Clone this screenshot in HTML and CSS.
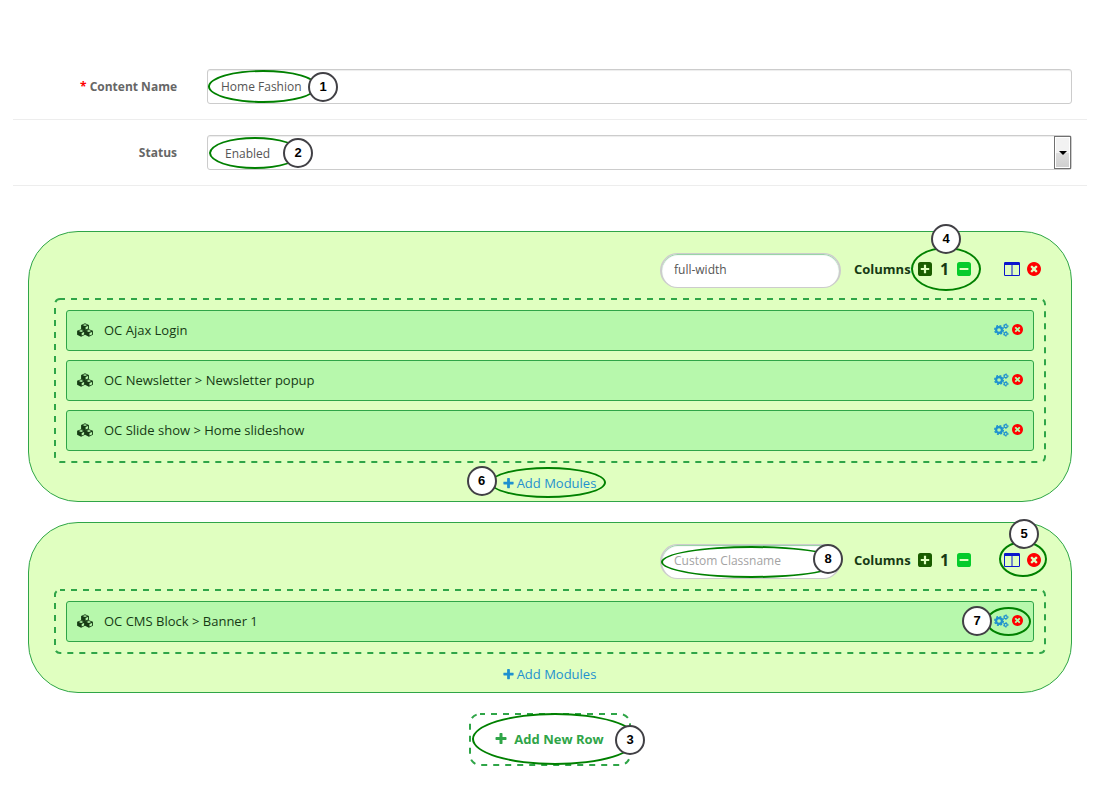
FILE: index.html
```html
<!DOCTYPE html>
<html lang="en">
<head>
<meta charset="utf-8">
<title>Content layout</title>
<link rel="stylesheet" href="styles.css">
</head>
<body>
<svg class="sprite" aria-hidden="true">
  <symbol id="plus" viewBox="0 0 1792 1792"><path d="M1600 736v192q0 40-28 68t-68 28h-416v416q0 40-28 68t-68 28h-192q-40 0-68-28t-28-68v-416h-416q-40 0-68-28t-28-68v-192q0-40 28-68t68-28h416v-416q0-40 28-68t68-28h192q40 0 68 28t28 68v416h416q40 0 68 28t28 68z"/></symbol>
  <symbol id="plus-square" viewBox="0 0 14 14"><rect width="14" height="14" rx="2.6"/><path d="M5.9 2.8h2.2v3.1h3.1v2.2H8.1v3.1H5.9V8.1H2.8V5.9h3.1z" fill="#e0ffc0"/></symbol>
  <symbol id="minus-square" viewBox="0 0 14 14"><rect width="14" height="14" rx="2.6"/><path d="M2.6 6h8.8v2H2.6z" fill="#e0ffc0"/></symbol>
  <symbol id="columns" viewBox="0 0 16 14"><path fill-rule="evenodd" d="M1.3 0h13.4Q16 0 16 1.3v11.4q0 1.3-1.3 1.3H1.3Q0 14 0 12.700V1.300Q0 0 1.300 0zM1 3v10h6.500V3zM8.500 3v10H15V3z"/></symbol>
  <symbol id="times-circle" viewBox="128 128 1536 1536"><path d="M1277 1122q0-26-19-45l-181-181 181-181q19-19 19-45 0-27-19-46l-90-90q-19-19-46-19-26 0-45 19l-181 181-181-181q-19-19-45-19-27 0-46 19l-90 90q-19 19-19 46 0 26 19 45l181 181-181 181q-19 19-19 45 0 27 19 46l90 90q19 19 46 19 26 0 45-19l181-181 181 181q19 19 45 19 27 0 46-19l90-90q19-19 19-46zm387-226q0 209-103 385.500t-279.500 279.500-385.500 103-385.500-103-279.500-279.500-103-385.500 103-385.500 279.500-279.500 385.500-103 385.500 103 279.500 279.500 103 385.500z"/></symbol>
  <symbol id="cubes" viewBox="0 0 16 14">
    <path d="M8 .3l3.900 1.600v4L8 7.700 4.100 6V2zM4.100 6.200l3.900 1.600v4l-3.900 1.900L.100 11.800v-4zM11.900 6.200l4 1.600v4l-4 1.900L8 11.800v-4z"/>
    <path fill="#b7f8ac" d="M8 1.200l2.300.9-2.300.9-2.300-.9zM8.600 4l2.400-1v2.500l-2.400 1.100zM4.100 7.100l2.300.9-2.300.9L1.800 8zM4.700 9.900l2.400-1v2.500l-2.400 1.100zM11.900 7.100l2.300.9-2.300.9L9.600 8zM12.500 9.900l2.500-1v2.500l-2.500 1.100z"/>
  </symbol>
  <symbol id="cogs" viewBox="0 0 15 14">
    <g fill="none" stroke="currentColor">
      <circle cx="5" cy="7" r="2.900" stroke-width="2.200"/>
      <circle cx="5" cy="7" r="4.300" stroke-width="1.400" stroke-dasharray="1.900 1.477"/>
      <circle cx="11.700" cy="3.200" r="1.500" stroke-width="1.200"/>
      <circle cx="11.700" cy="3.200" r="2.300" stroke-width="1" stroke-dasharray="1.200 1.209"/>
      <circle cx="11.700" cy="10.800" r="1.500" stroke-width="1.200"/>
      <circle cx="11.700" cy="10.800" r="2.300" stroke-width="1" stroke-dasharray="1.200 1.209"/>
    </g>
  </symbol>
</svg>

<form class="page">
  <div class="form-group">
    <label class="form-label" for="content-name"><span class="required">*</span> Content Name</label>
    <div class="field">
      <input class="control" id="content-name" type="text" value="Home Fashion">
      <span class="ring ring-name"></span><span class="badge badge-name">1</span>
    </div>
  </div>
  <div class="form-group">
    <label class="form-label" for="status">Status</label>
    <div class="field">
      <select class="control select" id="status"><option>Enabled</option><option>Disabled</option></select>
      <span class="select-arrow"></span>
      <span class="ring ring-status"></span><span class="badge badge-status">2</span>
    </div>
  </div>

  <div class="rows">
    <section class="row">
      <div class="row-header">
        <div class="class-field">
          <input class="control pill" type="text" aria-label="Class name" placeholder="Custom Classname" value="full-width">
        </div>
        <div class="row-tools">
          <strong class="columns-label">Columns</strong>
          <div class="counter">
            <button class="icon-btn add" type="button" aria-label="Add column"><svg class="icon-square"><use href="#plus-square"/></svg></button>
            <span class="count">1</span>
            <button class="icon-btn subtract" type="button" aria-label="Remove column"><svg class="icon-square"><use href="#minus-square"/></svg></button>
            <span class="ring ring-counter"></span><span class="badge badge-counter">4</span>
          </div>
          <div class="row-actions">
            <button class="icon-btn split" type="button" aria-label="Customize columns"><svg class="icon-columns"><use href="#columns"/></svg></button>
            <button class="icon-btn remove" type="button" aria-label="Delete row"><svg class="icon-square"><use href="#times-circle"/></svg></button>
          </div>
        </div>
      </div>
      <div class="modules">
        <svg class="dashes" aria-hidden="true"><rect rx="5"/></svg>
        <div class="module">
          <svg class="icon-cubes"><use href="#cubes"/></svg><span class="module-name">OC Ajax Login</span>
          <div class="module-actions">
            <button class="icon-btn edit" type="button" aria-label="Edit module"><svg class="icon-cogs"><use href="#cogs"/></svg></button>
            <button class="icon-btn remove" type="button" aria-label="Delete module"><svg class="icon-small"><use href="#times-circle"/></svg></button>
          </div>
        </div>
        <div class="module">
          <svg class="icon-cubes"><use href="#cubes"/></svg><span class="module-name">OC Newsletter &gt; Newsletter popup</span>
          <div class="module-actions">
            <button class="icon-btn edit" type="button" aria-label="Edit module"><svg class="icon-cogs"><use href="#cogs"/></svg></button>
            <button class="icon-btn remove" type="button" aria-label="Delete module"><svg class="icon-small"><use href="#times-circle"/></svg></button>
          </div>
        </div>
        <div class="module">
          <svg class="icon-cubes"><use href="#cubes"/></svg><span class="module-name">OC Slide show &gt; Home slideshow</span>
          <div class="module-actions">
            <button class="icon-btn edit" type="button" aria-label="Edit module"><svg class="icon-cogs"><use href="#cogs"/></svg></button>
            <button class="icon-btn remove" type="button" aria-label="Delete module"><svg class="icon-small"><use href="#times-circle"/></svg></button>
          </div>
        </div>
      </div>
      <div class="row-footer">
        <a class="add-modules" href="#"><svg class="icon-plus"><use href="#plus"/></svg>Add Modules<span class="ring ring-modules"></span><span class="badge badge-modules">6</span></a>
      </div>
    </section>

    <section class="row">
      <div class="row-header">
        <div class="class-field">
          <input class="control pill" type="text" aria-label="Class name" placeholder="Custom Classname">
          <span class="ring ring-class"></span><span class="badge badge-class">8</span>
        </div>
        <div class="row-tools">
          <strong class="columns-label">Columns</strong>
          <div class="counter">
            <button class="icon-btn add" type="button" aria-label="Add column"><svg class="icon-square"><use href="#plus-square"/></svg></button>
            <span class="count">1</span>
            <button class="icon-btn subtract" type="button" aria-label="Remove column"><svg class="icon-square"><use href="#minus-square"/></svg></button>
          </div>
          <div class="row-actions">
            <button class="icon-btn split" type="button" aria-label="Customize columns"><svg class="icon-columns"><use href="#columns"/></svg></button>
            <button class="icon-btn remove" type="button" aria-label="Delete row"><svg class="icon-square"><use href="#times-circle"/></svg></button>
            <span class="ring ring-actions"></span><span class="badge badge-actions">5</span>
          </div>
        </div>
      </div>
      <div class="modules">
        <svg class="dashes" aria-hidden="true"><rect rx="5"/></svg>
        <div class="module">
          <svg class="icon-cubes"><use href="#cubes"/></svg><span class="module-name">OC CMS Block &gt; Banner 1</span>
          <div class="module-actions">
            <button class="icon-btn edit" type="button" aria-label="Edit module"><svg class="icon-cogs"><use href="#cogs"/></svg></button>
            <button class="icon-btn remove" type="button" aria-label="Delete module"><svg class="icon-small"><use href="#times-circle"/></svg></button>
            <span class="ring ring-module"></span><span class="badge badge-module">7</span>
          </div>
        </div>
      </div>
      <div class="row-footer">
        <a class="add-modules" href="#"><svg class="icon-plus"><use href="#plus"/></svg>Add Modules</a>
      </div>
    </section>

    <button class="add-row" type="button"><svg class="dashes" aria-hidden="true"><rect rx="10"/></svg><svg class="icon-plus-big"><use href="#plus"/></svg>Add New Row<span class="ring ring-row"></span><span class="badge badge-row">3</span></button>
  </div>
</form>
</body>
</html>
```
FILE: styles.css
```css
* { box-sizing: border-box; }

body {
  margin: 0;
  background: #fff;
  color: #666;
  font: 12px/20px "Open Sans", "Noto Sans", sans-serif;
}

button, input, select { font: inherit; color: inherit; }
svg { display: block; fill: currentColor; }
.sprite { position: absolute; width: 0; height: 0; }

.page { padding: 54px 17px 28px 13px; }

.form-group {
  display: flex;
  align-items: center;
  padding: 15px 0;
  border-bottom: 1px solid #ededed;
}
.form-label {
  flex: 0 0 16.667%;
  padding-right: 15px;
  text-align: right;
  font-weight: 700;
}
.required { color: #f00; }
.field { position: relative; flex: 1; margin: 0 15px; }

.control {
  display: block;
  width: 100%;
  height: 35px;
  padding: 0 13px;
  border: 1px solid #ccc;
  border-radius: 3px;
  background: #fff;
  color: #555;
  box-shadow: inset 0 1px 1px rgba(0, 0, 0, .075);
}
.control::placeholder { color: #a3a3a3; opacity: 1; }
.select { appearance: none; padding: 2px 17px 0; }
.select-arrow {
  position: absolute;
  top: 1px;
  right: 1px;
  bottom: 1px;
  display: grid;
  place-items: center;
  width: 17px;
  border: 1px solid #707070;
  box-shadow: inset 0 0 0 1px #fff;
  background: linear-gradient(#f2f2f2 0 50%, #dedede 50%, #cfcfcf);
  pointer-events: none;
}
.select-arrow::before {
  content: "";
  border: 4px solid transparent;
  border-top-color: #000;
  border-bottom: 0;
}

.rows {
  display: flex;
  flex-direction: column;
  gap: 20px;
  padding: 45px 15px 0;
}
.row {
  padding: 21px 25px 8px;
  border: 1px solid #2fa548;
  border-radius: 50px;
  background: #e0ffc0;
  color: #163a14;
  font-size: 13px;
}
.row-header {
  display: flex;
  align-items: center;
  justify-content: flex-end;
  margin-bottom: 10px;
  padding-right: 5px;
}
.row-tools { display: flex; align-items: center; padding-bottom: 4px; }
.class-field { position: relative; width: 181px; margin-right: 13px; font-size: 12px; }
.pill {
  border: 2px solid #ccc;
  border-width: 1px 2px;
  border-radius: 18px;
  padding: 0 12px 2px;
  box-shadow: inset 0 1px 1px #8fcfa0;
}
.columns-label { width: 64px; }
.counter, .row-actions, .module-actions { position: relative; display: flex; align-items: center; }
.counter { margin-right: 33px; }
.count { width: 25px; text-align: center; font-size: 16px; font-weight: 700; }
.row-actions { gap: 7px; }
.icon-btn { padding: 0; border: 0; background: none; cursor: pointer; }
.add { color: #1a5c00; }
.subtract { color: #06cb2c; }
.split { color: #0b16cc; }
.remove { color: #f00; }
.edit { color: #1e91cf; }
.icon-square { width: 14px; height: 14px; }
.icon-columns { width: 16px; height: 14px; }
.icon-cubes { width: 16px; height: 14px; }
.icon-cogs { width: 15px; height: 14px; }
.icon-small { width: 11px; height: 11px; }
.icon-plus { width: 13px; height: 13px; }
.icon-plus-big { width: 14px; height: 14px; }

.modules {
  position: relative;
  display: flex;
  flex-direction: column;
  gap: 9px;
  padding: 12px;
}
.dashes {
  position: absolute;
  inset: 0;
  width: 100%;
  height: 100%;
  pointer-events: none;
}
.dashes rect {
  x: 1px;
  y: 1px;
  width: calc(100% - 2px);
  height: calc(100% - 2px);
  fill: none;
  stroke: #2fa548;
  stroke-width: 2px;
  stroke-dasharray: 6 6;
  stroke-dashoffset: 1px;
}
.module {
  display: flex;
  align-items: center;
  gap: 11px;
  min-height: 41px;
  padding: 0 10px 2px;
  border: 1px solid #2fa548;
  border-radius: 3px;
  background: #b7f8ac;
}
.module-actions { gap: 3px; margin-left: auto; }

.row-footer { display: flex; justify-content: center; padding-top: 10px; }
.add-modules {
  position: relative;
  display: flex;
  align-items: center;
  gap: 2px;
  padding-right: 2px;
  color: #1e91cf;
  text-decoration: none;
}

.add-row {
  position: relative;
  display: flex;
  align-items: center;
  align-self: center;
  justify-content: center;
  gap: 6px;
  width: 162px;
  height: 53px;
  padding: 0 2px 2px 0;
  border: 0;
  border-radius: 10px;
  background: #fff;
  color: #2fa548;
  font-size: 13px;
  font-weight: 700;
  cursor: pointer;
}

/* Numbered callouts laid over the controls */
.ring, .badge { position: absolute; border-radius: 50%; pointer-events: none; }
.ring { border: 2px solid #008000; }
.badge {
  display: grid;
  place-items: center;
  width: 30px;
  height: 30px;
  border: 2px solid #414045;
  background: #fff;
  color: #000;
  font: 700 13px/16px "Liberation Sans", sans-serif;
}
.ring-name { left: 1px; top: 1px; width: 110px; height: 33px; }
.badge-name { left: 101px; top: 3px; }
.ring-status { left: 2px; top: 2px; width: 92px; height: 32px; }
.badge-status { left: 76px; top: 3px; }
.ring-counter { left: -7px; right: -10px; top: -12px; height: 44px; }
.badge-counter { left: 13px; top: -35px; }
.ring-modules { left: -12px; right: -8px; top: -6px; height: 31px; }
.badge-modules { left: -35px; top: -7px; }
.ring-class { left: 1px; right: -1px; top: 2px; height: 32px; }
.badge-class { right: -2px; top: 0; }
.ring-actions { left: -5px; right: -6px; top: -12px; height: 36px; }
.badge-actions { left: 5px; top: -34px; }
.ring-module { left: -8px; right: -8px; top: -7px; height: 29px; }
.badge-module { left: -32px; top: -8px; }
.ring-row { left: 3px; right: -7px; top: 0; height: 52px; }
.badge-row { right: -14px; top: 12px; }
```
